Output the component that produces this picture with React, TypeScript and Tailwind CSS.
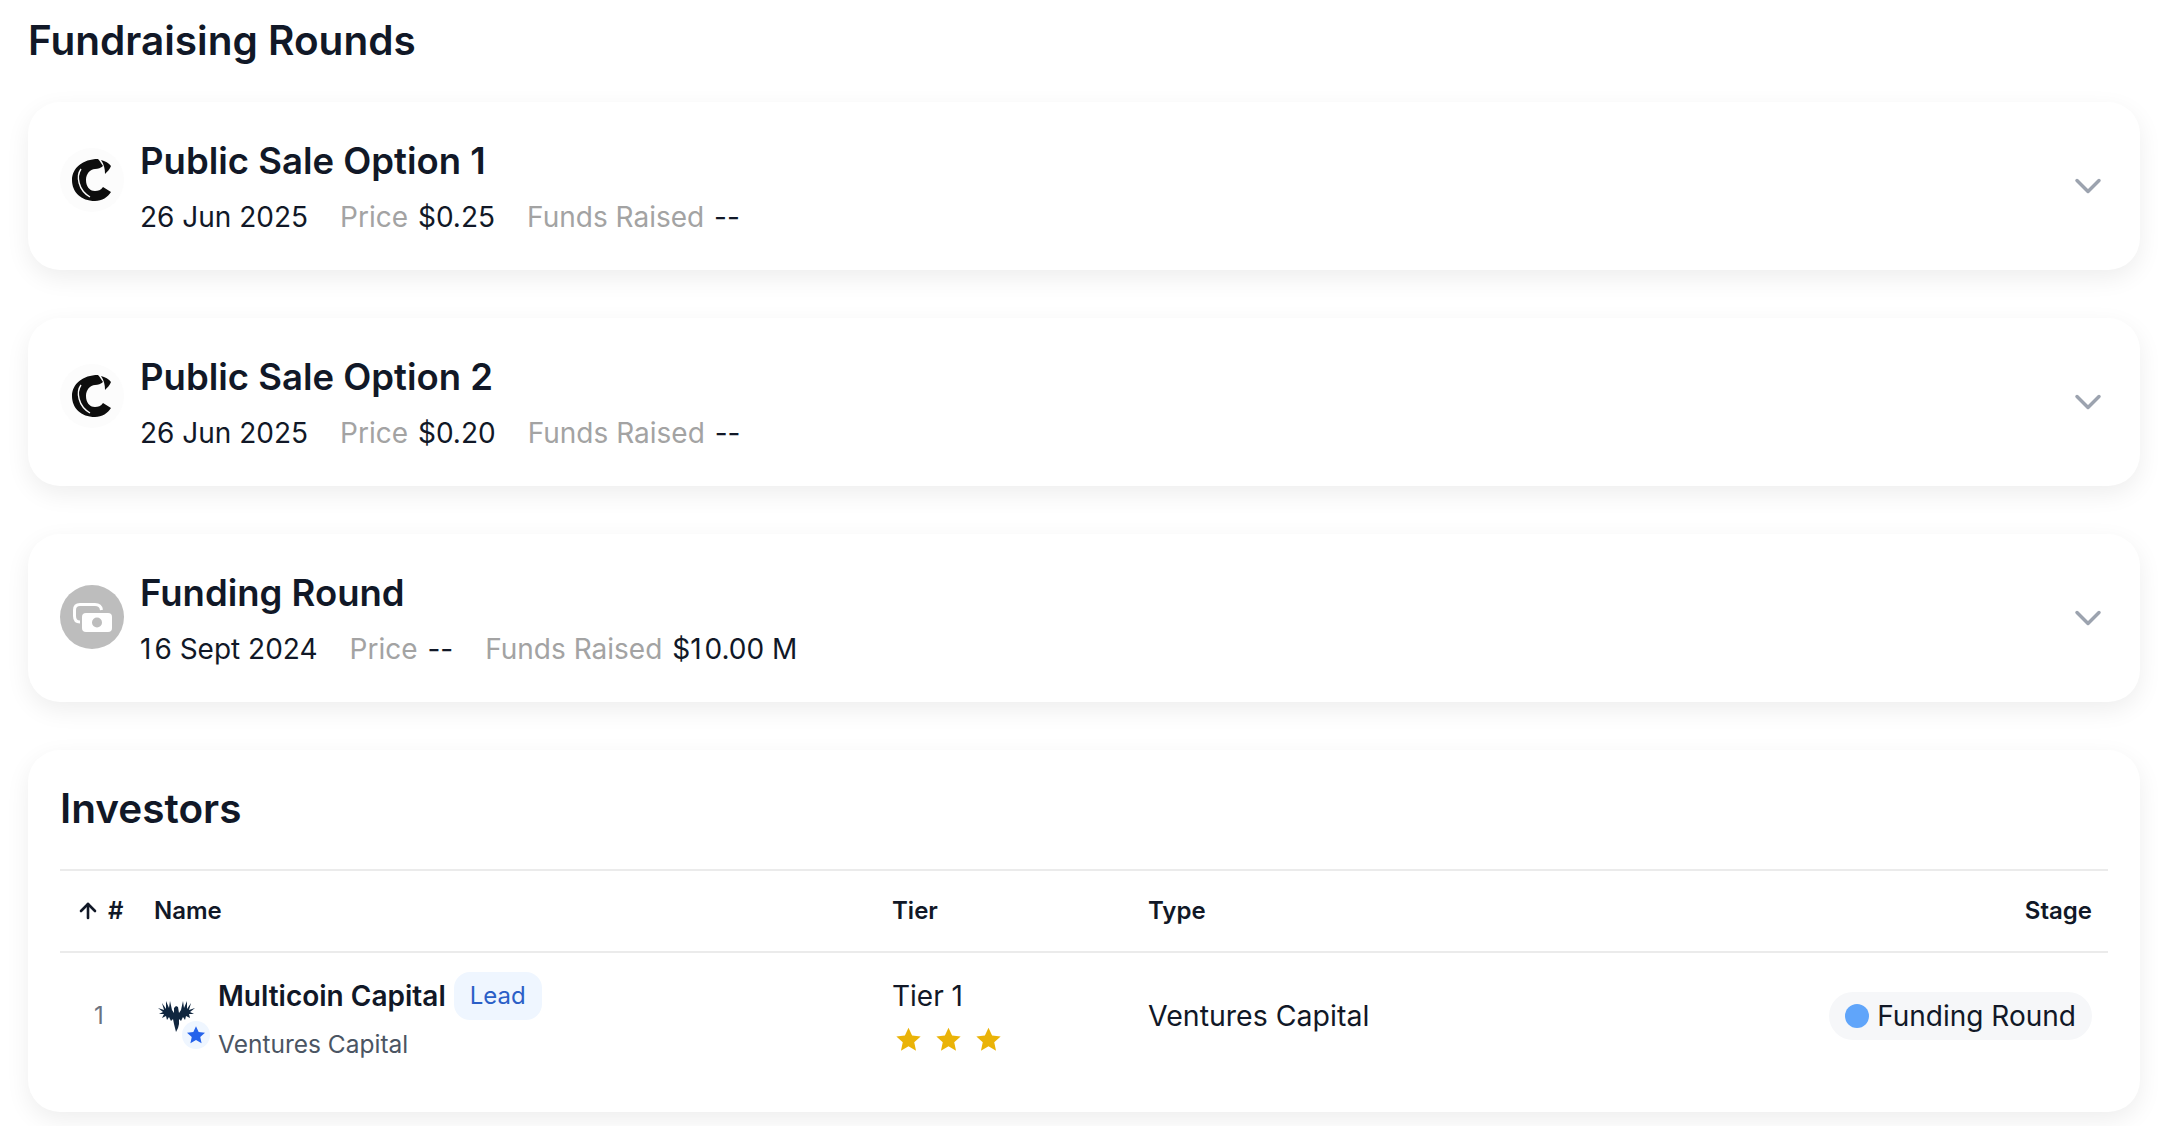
import React from 'react';
import { ChevronDown, ArrowUp } from 'lucide-react';

const cardClass = 'rounded-[32px] bg-white shadow-[0_8px_24px_rgba(0,0,0,0.07)]';
const starPath = 'M12 1.5l3.2 7 7.6.8-5.7 5.1 1.6 7.5L12 18.1l-6.7 3.8 1.6-7.5L1.2 9.3l7.6-.8z';

// the reference's leading "1" takes a bit more room than Inter's default figure
const One = () => <span className="pr-[3px]">1</span>;

function CoinLogo() {
  return (
    <div className="-mt-3 flex h-16 w-16 shrink-0 items-center justify-center rounded-full bg-[#fcfcfc]">
      <svg viewBox="0 0 40 42" className="h-[42px] w-[40px]">
        <path
          fill="#0d0d0d"
          d="M26 0 C11 0 0 9 0 21 C0 33 9 42 23 42 C30 42 36 38 39 33 L31 28 C29 31 26 32 23 32 C17 32 14 27 14 21 C14 15 18 10 23 10 C26 10 29 9 31 7 C29 4 28 2 26 0 Z"
        />
        <path fill="#0d0d0d" d="M29 1 C33 2 37 4 39 7 C38 10 35 13 33 15 C33 10 32 5 29 1 Z" />
        <path fill="none" stroke="#fcfcfc" strokeWidth="1.4" d="M9 10 C4 17 6 31 18 38" />
      </svg>
    </div>
  );
}

function FundingLogo() {
  return (
    <div className="-mt-[2px] flex h-16 w-16 shrink-0 items-center justify-center rounded-full bg-[#bdbdbd]">
      <svg viewBox="0 0 39 29" className="h-[29px] w-[39px]">
        <path
          fill="none"
          stroke="#fff"
          strokeWidth="3"
          d="M7 19 C3.5 19 1.5 17 1.5 13 V7 C1.5 3 3.5 1.5 7 1.5 H22 C26 1.5 28 3 28.5 7"
        />
        <rect x="9" y="10" width="30" height="19" rx="4" fill="#fff" />
        <circle cx="24" cy="19.5" r="5" fill="#bdbdbd" />
      </svg>
    </div>
  );
}

function Stat({ label, value }: { label: string; value: React.ReactNode }) {
  return (
    <span>
      <span className="text-[#a3a3a3]">{label}</span> <span className="ml-[2px] text-[#111827]">{value}</span>
    </span>
  );
}

function RoundCard({
  logo,
  title,
  date,
  price,
  raised,
}: {
  logo: React.ReactNode;
  title: string;
  date: React.ReactNode;
  price: string;
  raised: React.ReactNode;
}) {
  return (
    <div className={`${cardClass} flex h-[168px] items-center pl-8 pr-[30px]`}>
      {logo}
      <div className="ml-4 flex-1 pt-[1px]">
        <div className="text-[36.5px] leading-[48px] font-semibold text-[#111827]">{title}</div>
        <div className="mt-3 flex gap-8 text-[28px] leading-[40px] text-[#111827]">
          <span>{date}</span>
          <Stat label="Price" value={price} />
          <Stat label="Funds Raised" value={raised} />
        </div>
      </div>
      <ChevronDown className="h-11 w-11 text-[#9ca3af]" strokeWidth={1.9} />
    </div>
  );
}

function Star() {
  return (
    <svg viewBox="0 0 24 24" className="h-[27px] w-[27px]" fill="#eab308">
      <path d={starPath} />
    </svg>
  );
}

function InvestorLogo() {
  return (
    <div className="relative ml-1 mt-[14px] h-[52px] w-[52px]">
      <svg viewBox="0 0 37 32" className="absolute left-0 top-[3px] h-[32px] w-[37px]" fill="#10263f">
        <path d="M18 6 L20 7 L21 13 L23 10 L25 1 L26 8 L29 1 L29 9 L33 3 L31 10 L37 8 L32 12 L36 14 L31 14 L32 18 L28 16 L27 20 L25 17 L23 21 L21 19 L21 24 L20 28 L18 32 L17 28 L16 24 L15 19 L13 21 L11 17 L9 20 L8 16 L4 18 L6 14 L1 14 L5 12 L0 8 L6 10 L4 3 L8 9 L8 1 L11 8 L12 1 L14 10 L16 13 L16 8 Z" />
      </svg>
      <div className="absolute bottom-0 right-0 flex h-7 w-7 items-center justify-center rounded-full bg-[#eff6ff]">
        <svg viewBox="0 0 24 24" className="h-[20px] w-[20px]" fill="#2563eb">
          <path d={starPath} />
        </svg>
      </div>
    </div>
  );
}

export default function App() {
  return (
    <div className="min-h-[1126px] bg-white pl-7 pr-[18px] font-['Inter',sans-serif] text-[#111827]">
      <h2 className="pt-[16px] text-[40.5px] leading-[50px] font-semibold">Fundraising Rounds</h2>
      <div className="mt-9 flex flex-col gap-12">
        <RoundCard logo={<CoinLogo />} title="Public Sale Option 1" date="26 Jun 2025" price="$0.25" raised="--" />
        <RoundCard logo={<CoinLogo />} title="Public Sale Option 2" date="26 Jun 2025" price="$0.20" raised="--" />
        <RoundCard
          logo={<FundingLogo />}
          title="Funding Round"
          date={<><One />6 Sept 2024</>}
          price="--"
          raised={<>$<One />0.00 M</>}
        />
        <div className={`${cardClass} h-[362px] px-8 pt-[33px]`}>
          <h3 className="text-[40.5px] leading-[52px] font-semibold">Investors</h3>
          <div className="mt-[34px] grid h-[84px] grid-cols-[94px_738px_256px_1fr] items-center border-y-2 border-[#ebebeb] text-[24px] font-semibold">
            <div className="flex items-center pl-4">
              <ArrowUp className="h-6 w-6" strokeWidth={2.6} />
              <span className="ml-2">#</span>
            </div>
            <div>Name</div>
            <div>Tier</div>
            <div className="flex justify-between pr-4">
              <span>Type</span>
              <span>Stage</span>
            </div>
          </div>
          <div className="grid h-[126px] grid-cols-[94px_738px_256px_1fr] items-center">
            <div className="pl-[34px] text-[24px] text-[#6b7280]">1</div>
            <div className="flex items-center gap-2">
              <InvestorLogo />
              <div>
                <div className="flex items-center gap-2">
                  <span className="text-[28px] leading-[40px] font-semibold">Multicoin Capital</span>
                  <span className="rounded-2xl bg-[#eff6ff] px-4 py-1 text-[24px] leading-[40px] text-[#2b5fc7]">Lead</span>
                </div>
                <div className="mt-2 text-[24.5px] leading-[32px] text-[#4b5563]">Ventures Capital</div>
              </div>
            </div>
            <div className="mb-1">
              <div className="text-[28px] leading-[40px]">Tier 1</div>
              <div className="ml-[3px] mt-[10px] flex gap-[13px]">
                <Star />
                <Star />
                <Star />
              </div>
            </div>
            <div className="flex items-center justify-between pr-4">
              <span className="text-[28.5px]">Ventures Capital</span>
              <span className="flex items-center gap-2 rounded-full bg-[#f6f7f9] px-4 py-1 text-[28px] leading-[40px]">
                <span className="h-6 w-6 rounded-full bg-[#60a5fa]" />
                Funding Round
              </span>
            </div>
          </div>
        </div>
      </div>
    </div>
  );
}
